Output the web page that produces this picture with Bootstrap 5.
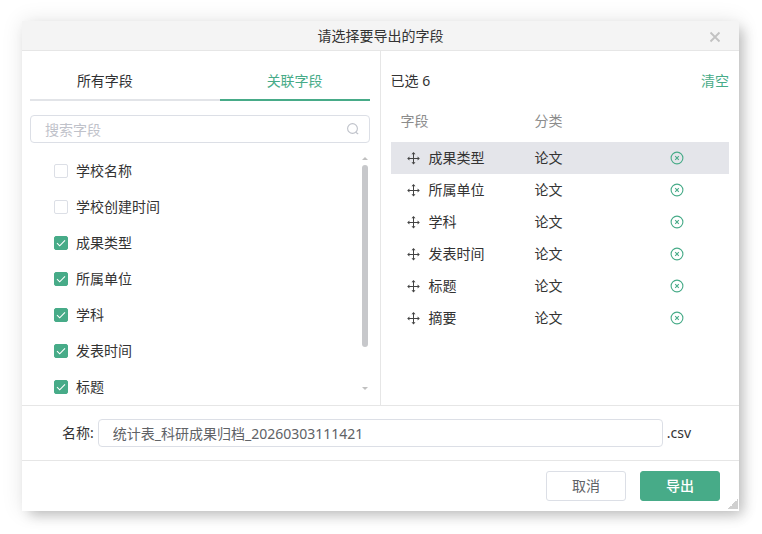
<!DOCTYPE html>
<html lang="zh-CN">
<head>
<meta charset="utf-8">
<meta name="viewport" content="width=device-width, initial-scale=1">
<title>请选择要导出的字段</title>
<link href="https://cdn.jsdelivr.net/npm/bootstrap@5.3.0/dist/css/bootstrap.min.css" rel="stylesheet">
<style>
  :root { --brand: #47ab88; --line: #e6e6e6; --field-line: #dcdfe6; }
  body { font: 14px/20px "Noto Sans", "Noto Sans CJK SC", sans-serif; color: #333; background: #fff; }
  .export-dialog { margin: 21px 23px 23px 22px; background: #fff; box-shadow: 6px 6px 12px -2px rgba(0, 0, 0, .22), 0 0 20px rgba(0, 0, 0, .1); }
  .dialog-head { height: 30px; background: #f4f4f4; border-bottom: 1px solid var(--line); }
  .dialog-title { font-size: 14px; line-height: 20px; }
  .dialog-close { right: 18px; top: 10px; width: 12px; height: 12px; color: #c2c2c2; }
  .dialog-close svg, .search-icon, .row-remove svg, .row-move { display: block; }
  .plain-btn { border: 0; padding: 0; background: none; line-height: 20px; }
  .pane-left { padding: 20px 10px 0 8px; border-right: 1px solid var(--line); }
  .pane-right { padding: 20px 10px 0; }
  .field-tabs { gap: 0 40px; background: linear-gradient(#e2e4e8, #e2e4e8) left bottom / 100% 2px no-repeat; }
  .field-tabs .nav-link { font-size: 14px; line-height: 20px; padding: 0 0 8px; color: #303133; background: none; border: 0; border-radius: 0; border-bottom: 2px solid transparent; }
  .field-tabs .nav-link.active { color: var(--brand); border-bottom-color: var(--brand); }
  .search-box { margin: 14px 0 10px; }
  .text-field { height: 28px; padding: 0 14px; font-size: 14px; line-height: 26px; color: #606266; border: 1px solid var(--field-line); border-radius: 4px; }
  .text-field::placeholder { color: #bfc2ca; }
  .search-icon { right: 11px; top: 8px; }
  .option-row { height: 36px; padding-left: 24px; gap: 8px; }
  .option-row .form-check-input { width: 14px; height: 14px; margin: 0; border: 1px solid var(--field-line); border-radius: 2px; }
  .option-row .form-check-input:checked { border-color: var(--brand); background-color: var(--brand);
    background-size: 14px 14px;
    background-image: url("data:image/svg+xml,%3Csvg xmlns='http://www.w3.org/2000/svg' viewBox='0 0 14 14'%3E%3Cpath fill='none' stroke='%23fff' stroke-width='1.1' d='M3 7.2l2.700 2.600L11 4.300'/%3E%3C/svg%3E"); }
  .scroll-rail { width: 6px; margin-right: 2px; padding: 4px 0 15px; }
  .scroll-thumb { height: 182px; margin-top: 5px; border-radius: 3px; background: #c7c8cb; }
  .arrow-up, .arrow-down { border: 3px solid transparent; border-top-width: 0; border-bottom: 3px solid #c0c0c0; }
  .arrow-down { border-bottom-width: 0; border-top: 3px solid #c0c0c0; }
  .clear-btn { color: var(--brand); }
  .picked { table-layout: fixed; margin-top: 10px; }
  .picked th { height: 41px; padding: 0 0 1px; font-weight: 400; color: #8c8c8c; vertical-align: middle; }
  .picked th:first-child { padding-left: 10px; }
  .picked td { height: 32px; padding: 0; vertical-align: middle; }
  .picked td:first-child { padding-left: 15px; }
  .picked .current { background: #e4e5ea; }
  .picked .gap-icon { gap: 9px; }
  .col-field { width: 144px; }
  .col-remove { width: 104px; }
  .row-move { color: #444; }
  .row-remove { color: var(--brand); }
  .name-bar { padding: 13px 48px 13px 40px; gap: 4px; border-top: 1px solid var(--line); border-bottom: 1px solid var(--line); }
  .dialog-foot { padding: 10px 19px 10px; gap: 14px; }
  .dialog-foot .btn { width: 80px; height: 30px; padding: 0; font-size: 14px; line-height: 28px; border-radius: 3px; }
  .btn-plain { --bs-btn-color: #606266; --bs-btn-border-color: #dcdfe6; --bs-btn-bg: #fff; }
  .btn-brand { --bs-btn-color: #fff; --bs-btn-border-color: #47ab88; --bs-btn-bg: #47ab88; --bs-btn-hover-color: #fff; --bs-btn-hover-bg: #3d9c7b; }
  .dialog-foot .btn-brand { font-weight: 500; }
  .resize-grip { right: 1px; bottom: 2px; width: 10px; height: 10px; background: linear-gradient(135deg, transparent 50%, #d0d0d0 50%); }
</style>
<script src="https://cdn.jsdelivr.net/npm/bootstrap@5.3.0/dist/js/bootstrap.bundle.min.js"></script>
</head>
<body>
<svg class="d-none" aria-hidden="true">
  <symbol id="move" viewBox="0 0 14 14">
    <path d="M7.500 2v10M2 7.500h11" fill="none" stroke="currentColor"/>
    <path d="M7.500 1l2 2.200h-4zM7.500 13.500l2-2.200h-4zM1.200 7.500l2.200-2v4zM13.800 7.500l-2.200-2v4z" fill="currentColor"/>
  </symbol>
  <symbol id="remove" viewBox="0 0 14 14">
    <circle cx="7" cy="7" r="5.900" fill="none" stroke="currentColor" stroke-width="1.1"/>
    <path d="M5.200 5.200l3.600 3.600M8.800 5.200L5.200 8.800" fill="none" stroke="currentColor" stroke-width="1.1"/>
  </symbol>
</svg>
<main class="export-dialog position-relative" role="dialog" aria-labelledby="dialogTitle">
  <header class="dialog-head position-relative d-flex align-items-center justify-content-center">
    <h1 id="dialogTitle" class="dialog-title m-0 fw-normal">请选择要导出的字段</h1>
    <button type="button" class="dialog-close plain-btn position-absolute" aria-label="关闭">
      <svg width="12" height="12" viewBox="0 0 12 12"><path d="M1.500 1.500l9 9M10.500 1.500l-9 9" stroke="currentColor" stroke-width="1.8"/></svg>
    </button>
  </header>
  <div class="row g-0">
    <section class="pane-left col-6">
      <div class="field-tabs nav nav-fill flex-nowrap" role="tablist">
        <button type="button" class="nav-link w-100" role="tab" aria-selected="false">所有字段</button>
        <button type="button" class="nav-link w-100 active" role="tab" aria-selected="true">关联字段</button>
      </div>
      <div class="search-box position-relative">
        <input type="text" class="form-control text-field" placeholder="搜索字段" aria-label="搜索字段">
        <svg class="search-icon position-absolute" width="12" height="12" viewBox="0 0 12 12" fill="none" stroke="#bfc2ca" stroke-width="1.1"><circle cx="5.500" cy="5.500" r="4.900"/><path d="M8.700 9.300l2.500 1.700"/></svg>
      </div>
      <div class="options d-flex">
        <div class="flex-grow-1">
          <div class="option-row d-flex align-items-center"><input class="form-check-input" type="checkbox" id="f1"><label for="f1">学校名称</label></div>
          <div class="option-row d-flex align-items-center"><input class="form-check-input" type="checkbox" id="f2"><label for="f2">学校创建时间</label></div>
          <div class="option-row d-flex align-items-center"><input class="form-check-input" type="checkbox" id="f3" checked><label for="f3">成果类型</label></div>
          <div class="option-row d-flex align-items-center"><input class="form-check-input" type="checkbox" id="f4" checked><label for="f4">所属单位</label></div>
          <div class="option-row d-flex align-items-center"><input class="form-check-input" type="checkbox" id="f5" checked><label for="f5">学科</label></div>
          <div class="option-row d-flex align-items-center"><input class="form-check-input" type="checkbox" id="f6" checked><label for="f6">发表时间</label></div>
          <div class="option-row d-flex align-items-center"><input class="form-check-input" type="checkbox" id="f7" checked><label for="f7">标题</label></div>
        </div>
        <div class="scroll-rail d-flex flex-column" aria-hidden="true">
          <div class="arrow-up"></div><div class="scroll-thumb"></div><div class="arrow-down mt-auto"></div>
        </div>
      </div>
    </section>
    <section class="pane-right col-6">
      <div class="d-flex justify-content-between">
        <span>已选 6</span>
        <button type="button" class="plain-btn clear-btn">清空</button>
      </div>
      <table class="picked w-100">
        <colgroup><col class="col-field"><col class="col-kind"><col class="col-remove"></colgroup>
        <thead><tr><th scope="col">字段</th><th scope="col" colspan="2">分类</th></tr></thead>
        <tbody>
          <tr class="current"><td><div class="d-flex align-items-center gap-icon"><svg class="row-move" width="14" height="14"><use href="#move"/></svg>成果类型</div></td><td>论文</td><td><button type="button" class="plain-btn row-remove d-block mx-auto" aria-label="移除成果类型"><svg width="14" height="14"><use href="#remove"/></svg></button></td></tr>
          <tr><td><div class="d-flex align-items-center gap-icon"><svg class="row-move" width="14" height="14"><use href="#move"/></svg>所属单位</div></td><td>论文</td><td><button type="button" class="plain-btn row-remove d-block mx-auto" aria-label="移除所属单位"><svg width="14" height="14"><use href="#remove"/></svg></button></td></tr>
          <tr><td><div class="d-flex align-items-center gap-icon"><svg class="row-move" width="14" height="14"><use href="#move"/></svg>学科</div></td><td>论文</td><td><button type="button" class="plain-btn row-remove d-block mx-auto" aria-label="移除学科"><svg width="14" height="14"><use href="#remove"/></svg></button></td></tr>
          <tr><td><div class="d-flex align-items-center gap-icon"><svg class="row-move" width="14" height="14"><use href="#move"/></svg>发表时间</div></td><td>论文</td><td><button type="button" class="plain-btn row-remove d-block mx-auto" aria-label="移除发表时间"><svg width="14" height="14"><use href="#remove"/></svg></button></td></tr>
          <tr><td><div class="d-flex align-items-center gap-icon"><svg class="row-move" width="14" height="14"><use href="#move"/></svg>标题</div></td><td>论文</td><td><button type="button" class="plain-btn row-remove d-block mx-auto" aria-label="移除标题"><svg width="14" height="14"><use href="#remove"/></svg></button></td></tr>
          <tr><td><div class="d-flex align-items-center gap-icon"><svg class="row-move" width="14" height="14"><use href="#move"/></svg>摘要</div></td><td>论文</td><td><button type="button" class="plain-btn row-remove d-block mx-auto" aria-label="移除摘要"><svg width="14" height="14"><use href="#remove"/></svg></button></td></tr>
        </tbody>
      </table>
    </section>
  </div>
  <div class="name-bar d-flex align-items-center">
    <label for="fileName" class="text-nowrap">名称:</label>
    <input type="text" class="form-control text-field" id="fileName" value="统计表_科研成果归档_20260303111421">
    <span>.csv</span>
  </div>
  <footer class="dialog-foot d-flex justify-content-end">
    <button type="button" class="btn btn-plain">取消</button>
    <button type="button" class="btn btn-brand">导出</button>
  </footer>
  <div class="resize-grip position-absolute" aria-hidden="true"></div>
</main>
</body>
</html>
